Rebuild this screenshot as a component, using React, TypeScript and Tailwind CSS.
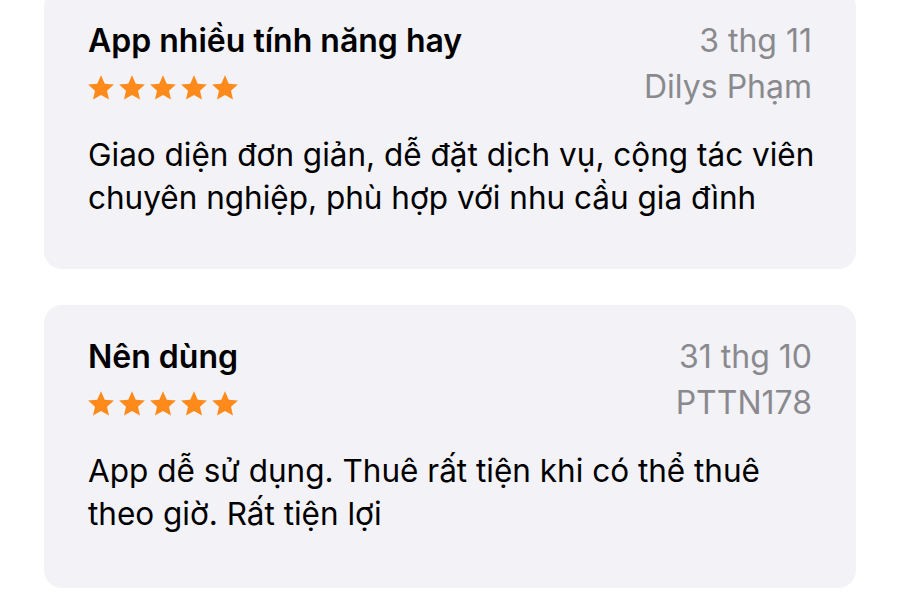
import React from "react";

const Star = () => (
  <svg width="26" height="25" viewBox="1.3 1.5 21.4 20.3" className="block">
    <path
      d="M12 1.6l3.09 6.9 7.51.73-5.66 5 1.64 7.37L12 17.8l-6.58 3.8 1.64-7.37-5.66-5 7.51-.73z"
      fill="#fe8a1c"
    />
  </svg>
);

const Stars = () => (
  <div className="flex gap-[5px]">
    <Star />
    <Star />
    <Star />
    <Star />
    <Star />
  </div>
);

type Review = { title: string; date: string; author: string; body: string[]; h: string };

const reviews: Review[] = [
  {
    title: "App nhiều tính năng hay",
    date: "3 thg 11",
    author: "Dilys Phạm",
    body: [
      "Giao diện đơn giản, dễ đặt dịch vụ, cộng tác viên",
      "chuyên nghiệp, phù hợp với nhu cầu gia đình",
    ],
    h: "h-[280px]",
  },
  {
    title: "Nên dùng",
    date: "31 thg 10",
    author: "PTTN178",
    body: ["App dễ sử dụng. Thuê rất tiện khi có thể thuê", "theo giờ. Rất tiện lợi"],
    h: "h-[283px]",
  },
];

const Card = ({ r }: { r: Review }) => (
  <div className={`${r.h} w-[812px] rounded-[18px] bg-[#f2f2f7] px-[44px] pt-[29px]`}>
    <div className="flex justify-between">
      <div className="flex flex-col">
        <div className="whitespace-nowrap text-[32px] font-semibold leading-[46px] text-black">{r.title}</div>
        <div className="flex h-[46px] items-center">
          <Stars />
        </div>
      </div>
      <div className="flex flex-col items-end whitespace-nowrap text-[32px] leading-[46px] text-[#8a8a8e]">
        <div>{r.date}</div>
        <div>{r.author}</div>
      </div>
    </div>
    <div className="mt-[23px] whitespace-nowrap text-[31.5px] leading-[43px] text-black">
      {r.body.map((l, i) => (
        <div key={i}>{l}</div>
      ))}
    </div>
  </div>
);

export default function App() {
  return (
    <div
      className="h-[600px] w-[900px] overflow-hidden bg-white px-[44px]"
      style={{ fontFamily: "Inter, 'Noto Sans', sans-serif" }}
    >
      <div className="-mt-[11px] flex flex-col gap-[36px]">
        {reviews.map((r, i) => (
          <Card key={i} r={r} />
        ))}
      </div>
    </div>
  );
}
